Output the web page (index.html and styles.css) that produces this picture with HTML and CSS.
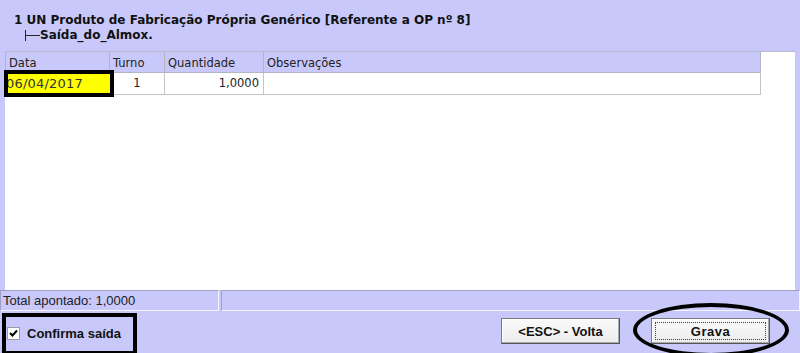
FILE: index.html
```html
<!DOCTYPE html>
<html lang="pt">
<head>
<meta charset="utf-8">
<title>Saída do Almox</title>
<link rel="stylesheet" href="styles.css">
</head>
<body>
<div class="window">
  <header class="head">
    <div class="title">1 UN Produto de Fabricação Própria Genérico [Referente a OP nº 8]</div>
    <div class="sub"><span class="tree"></span><span>Saída_do_Almox.</span></div>
  </header>
  <main class="gridwrap">
    <table class="grid">
      <colgroup>
        <col class="c-data">
        <col class="c-turno">
        <col class="c-qtd">
        <col class="c-obs">
      </colgroup>
      <thead>
        <tr><th>Data</th><th>Turno</th><th>Quantidade</th><th>Observações</th></tr>
      </thead>
      <tbody>
        <tr>
          <td class="date"><span class="dtext">06/04/2017</span></td>
          <td class="center">1</td>
          <td class="right">1,0000</td>
          <td></td>
        </tr>
      </tbody>
    </table>
  </main>
  <div class="status">
    <div class="panel p1">Total apontado: 1,0000</div>
    <div class="panel p2"></div>
  </div>
  <footer class="bottom">
    <label class="confirm">
      <span class="cb"><svg width="11" height="11" viewBox="0 0 11 11"><path d="M2 5 L4.5 7.5 L9 2.5" fill="none" stroke="#000" stroke-width="2"/></svg></span>
      <span>Confirma saída</span>
    </label>
    <div class="buttons">
      <button class="btn">&lt;ESC&gt; - Volta</button>
      <button class="btn grava"><span class="focus">Grava</span></button>
      <span class="ring"></span>
    </div>
  </footer>
</div>
</body>
</html>
```

FILE: styles.css
```css
* { box-sizing: border-box; }
html, body { margin: 0; padding: 0; }
body {
  width: 800px;
  height: 353px;
  overflow: hidden;
  background: #c8c8fa;
  font-family: "DejaVu Sans", Verdana, sans-serif;
  color: #000;
}
.window {
  display: flex;
  flex-direction: column;
  height: 353px;
}
.head {
  height: 51px;
  padding: 13px 0 0 14px;
  font-weight: bold;
  font-size: 12px;
  line-height: 15px;
  color: #111;
}
.sub {
  display: flex;
  align-items: center;
  padding-left: 11px;
}
.tree {
  position: relative;
  width: 15px;
  height: 11px;
  border-left: 1px solid #222;
}
.tree::after {
  content: "";
  position: absolute;
  left: 0;
  top: 5px;
  width: 14px;
  border-top: 1px solid #222;
}
.gridwrap {
  flex: 1;
  margin: 0 5px;
  background: #fff;
  border-top: 1px solid #b8b8c8;
}
.grid {
  border-collapse: collapse;
  table-layout: fixed;
  width: 755px;
  font-size: 11.5px;
  color: #222;
}
.c-data { width: 104px; }
.c-turno { width: 55px; }
.c-qtd { width: 99px; }
.c-obs { width: 497px; }
.grid th {
  height: 20px;
  background: #c8c8fa;
  border: 1px solid #b4b4c4;
  border-top: 0;
  font-weight: normal;
  text-align: left;
  padding: 3px 3px 0;
  vertical-align: middle;
}
.grid td {
  height: 22px;
  border: 1px solid #c4c4c4;
  padding: 0 3px;
  vertical-align: middle;
}
.grid td.center { text-align: center; }
.grid td.right { text-align: right; padding-right: 4px; }
.grid td.date {
  position: relative;
  padding: 0;
  font-size: 13px;
}
.grid td.date::before {
  content: "";
  position: absolute;
  left: -2px;
  top: -3px;
  right: -5px;
  bottom: -3px;
  background: #ffff00;
}
.grid td.date::after {
  content: "";
  position: absolute;
  left: -2px;
  top: -3px;
  right: -5px;
  bottom: -3px;
  border: 4px solid #000;
}
.dtext {
  position: relative;
  display: block;
  padding-left: 0;
  color: #333;
  letter-spacing: 0.2px;
}
.status {
  height: 21px;
  display: flex;
  gap: 2px;
  font-family: "Liberation Sans", Arial, sans-serif;
  font-size: 13px;
}
.panel {
  border-top: 1px solid #9e9ec8;
  border-left: 1px solid #9e9ec8;
  border-bottom: 1px solid #f4f4ff;
  border-right: 1px solid #f4f4ff;
  padding: 2px 0 0 2px;
  color: #222;
}
.p1 { width: 219px; }
.p2 { flex: 1; }
.bottom {
  height: 42px;
  display: flex;
  justify-content: space-between;
  align-items: flex-start;
}
.confirm {
  margin: 2px 0 0 2px;
  width: 135px;
  height: 42px;
  border: 4px solid #000;
  display: flex;
  align-items: center;
  gap: 7px;
  padding: 0 0 2px 1px;
  font-family: "Liberation Sans", Arial, sans-serif;
  font-weight: bold;
  font-size: 13px;
  color: #111;
}
.cb {
  width: 13px;
  height: 13px;
  background: #fff;
  border: 1px solid #9a9aa8;
  display: flex;
  align-items: center;
  justify-content: center;
}
.buttons {
  position: relative;
  display: flex;
  gap: 31px;
  margin: 7px 30px 0 0;
}
.btn {
  width: 119px;
  height: 26px;
  background: linear-gradient(#fafafa, #ececec);
  border: 1px solid #7a7a7a;
  border-right-color: #555;
  border-bottom-color: #555;
  box-shadow: inset -1px -1px 0 #aaa, inset 1px 1px 0 #fff;
  font-family: "Liberation Sans", Arial, sans-serif;
  font-weight: bold;
  font-size: 13px;
  color: #111;
  padding: 0;
}
.grava { padding: 3px; }
.focus {
  display: flex;
  align-items: center;
  justify-content: center;
  height: 100%;
  border: 1px dotted #444;
  letter-spacing: 0.5px;
}
.ring {
  position: absolute;
  left: 132px;
  top: -15px;
  width: 156px;
  height: 54px;
  border: 4px solid #000;
  border-radius: 50%;
  pointer-events: none;
}
```
